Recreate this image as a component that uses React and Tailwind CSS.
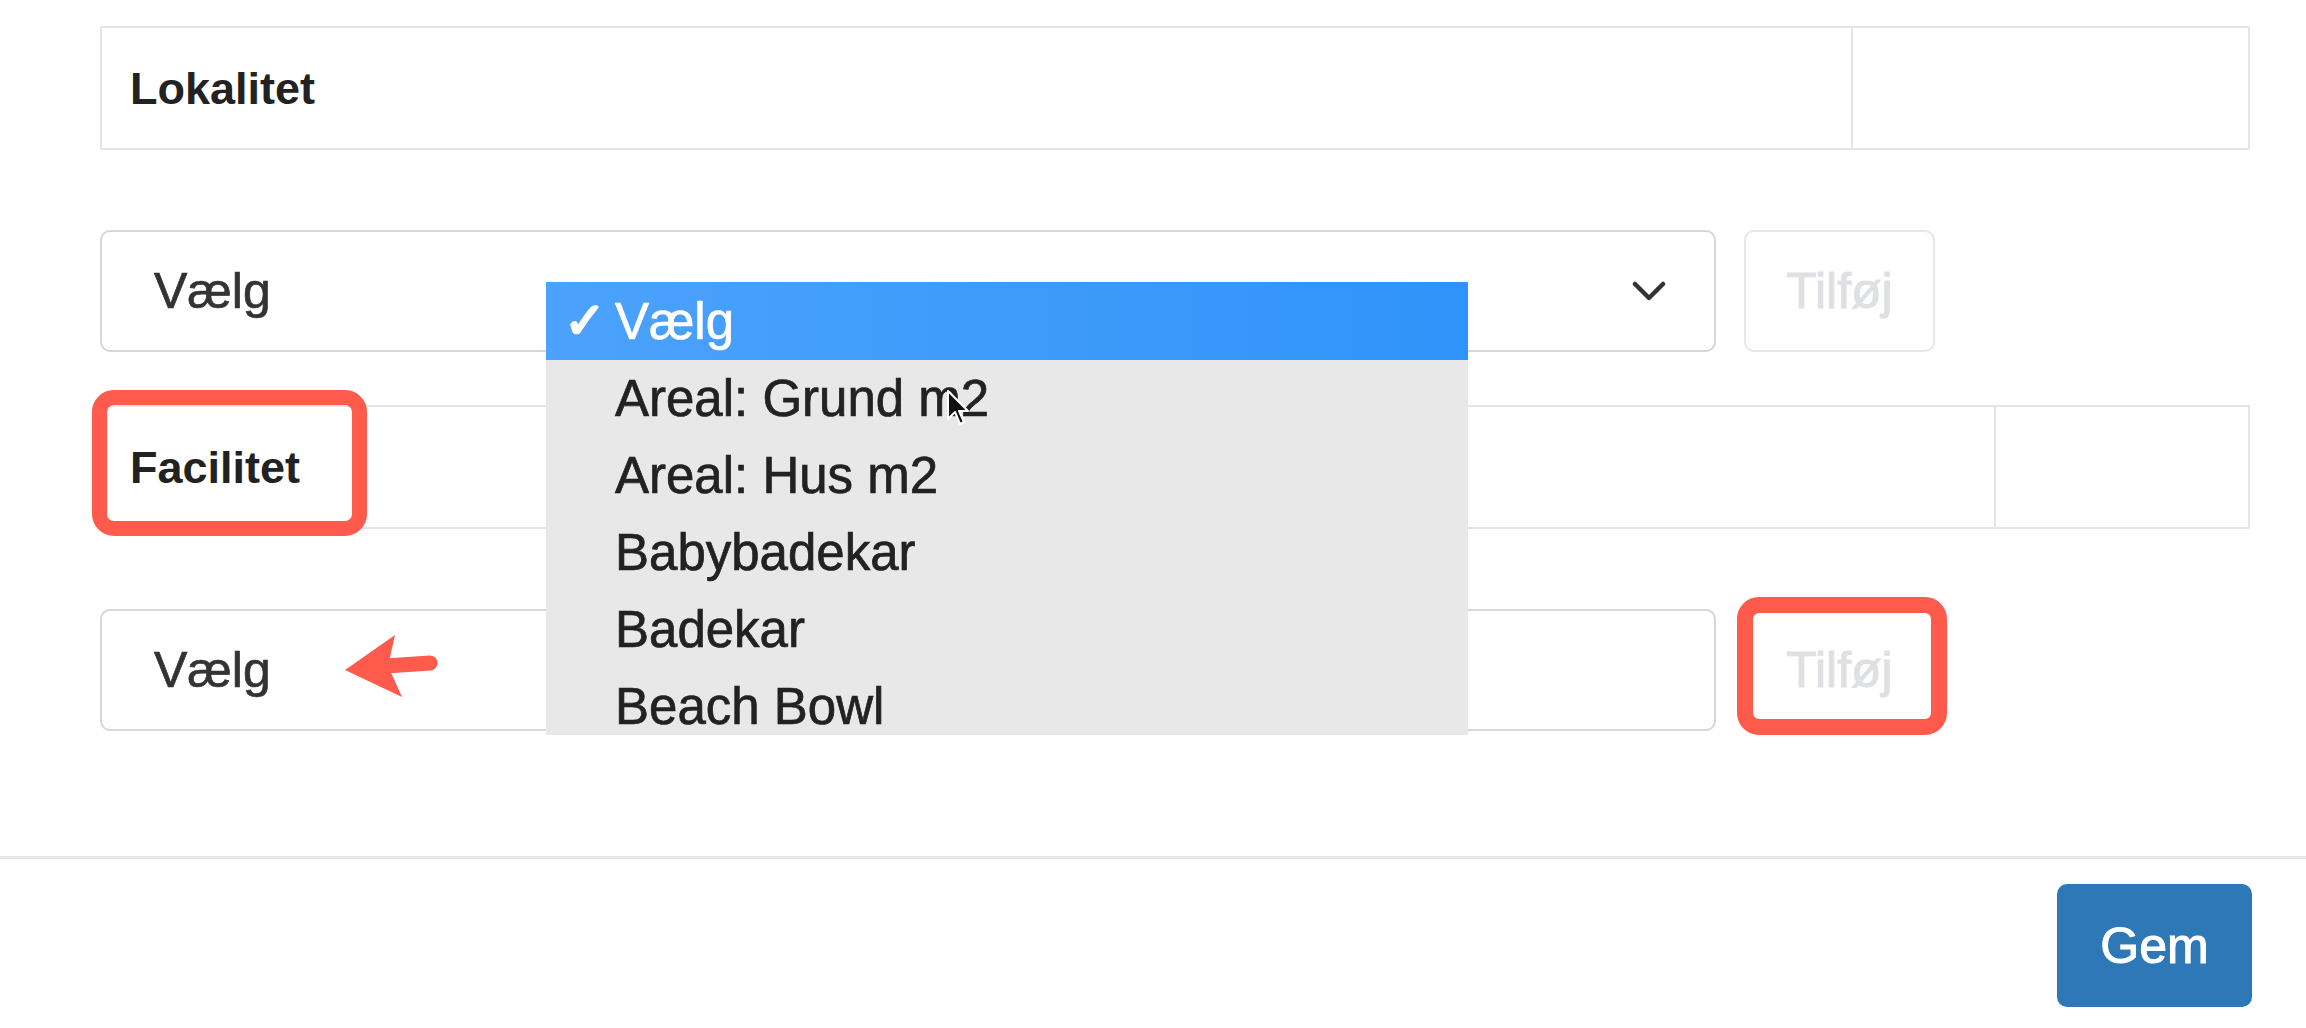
import React from "react";

const options = ["Areal: Grund m2", "Areal: Hus m2", "Babybadekar", "Badekar", "Beach Bowl"];

function TableHead({ label, split }) {
  return (
    <div className="flex h-[124px] border-2 border-[#e4e5e7]">
      <div className={`${split} flex items-center border-r-2 border-[#e4e5e7] pl-[28px]`}>
        <span className="text-[45px] font-bold leading-none text-[#222]">{label}</span>
      </div>
      <div className="flex-1" />
    </div>
  );
}

function SelectRow({ chevron }) {
  return (
    <div className="flex items-center gap-[28px]">
      <div className="flex h-[122px] w-[1616px] items-center justify-between rounded-[10px] border-2 border-[#d5d7da] bg-white pl-[52px] pr-[48px]">
        <span className="text-[50px] leading-none text-[#333] [-webkit-text-stroke:0.7px_#333]">Vælg</span>
        {chevron && (
          <svg width="34" height="22" viewBox="0 0 34 22" fill="none">
            <path d="M3 4 L17 18 L31 4" stroke="#333" strokeWidth="4.5" strokeLinecap="round" strokeLinejoin="round" />
          </svg>
        )}
      </div>
      <button className="flex h-[122px] w-[191px] items-center justify-center rounded-[10px] border-2 border-[#e6e7e9] bg-white text-[50px] leading-none text-[#dfe0e3] [-webkit-text-stroke:1px_#dfe0e3]">
        Tilføj
      </button>
    </div>
  );
}

export default function App() {
  return (
    <div className="relative h-[1028px] w-[2306px] overflow-hidden bg-white" style={{ fontFamily: '"Liberation Sans", Arial, sans-serif' }}>
      <div className="pl-[100px] pr-[56px] pt-[26px]">
        <TableHead label="Lokalitet" split="w-[1751px]" />
        <div className="mt-[80px]">
          <SelectRow chevron />
        </div>
        <div className="mt-[53px]">
          <TableHead label="Facilitet" split="w-[1894px]" />
        </div>
        <div className="mt-[80px]">
          <SelectRow chevron={false} />
        </div>
      </div>

      <div className="mt-[125px] h-[3px] w-full bg-[#e6e6e6]" />

      <div className="flex justify-end pr-[54px] pt-[25px]">
        <button className="flex h-[123px] w-[195px] items-center justify-center rounded-[10px] bg-[#2f78b8] text-[50px] leading-none text-white [-webkit-text-stroke:1px_#fff]">
          Gem
        </button>
      </div>

      {/* open select list */}
      <div className="absolute left-[546px] top-[282px] h-[453px] w-[922px] overflow-hidden bg-[#e8e8e8] text-[51px] leading-none text-[#222] [-webkit-text-stroke:0.7px_#222]">
        <div className="flex h-[78px] items-center bg-gradient-to-r from-[#4ca2fc] to-[#2f93f9] pl-[18px] text-white [-webkit-text-stroke:0.7px_#fff]">
          <span className="inline-block w-[51px] text-[50px] font-bold">✓</span>
          <span>Vælg</span>
        </div>
        {options.map((o) => (
          <div key={o} className="flex h-[77px] items-center pl-[69px]">
            {o}
          </div>
        ))}
      </div>

      {/* mouse pointer */}
      <svg className="absolute left-[946px] top-[389px]" width="24" height="38" viewBox="0 0 24 38">
        <path d="M2 2 L2 30 L9 23 L14 35 L18 33 L13 22 L22 22 Z" fill="#111" stroke="#fff" strokeWidth="2" strokeLinejoin="round" />
      </svg>

      {/* annotations */}
      <div className="absolute left-[92px] top-[390px] h-[146px] w-[275px] rounded-[22px] border-[15px] border-[#fe5b4c]" />
      <div className="absolute left-[1737px] top-[597px] h-[138px] w-[210px] rounded-[22px] border-[16px] border-[#fe5b4c]" />
      <svg className="absolute left-[340px] top-[630px]" width="100" height="72" viewBox="0 0 100 72">
        <path d="M5 40 L55 5 L48 36 L62 67 Z" fill="#fe5b4c" />
        <path d="M46 36 L90 33" stroke="#fe5b4c" strokeWidth="15" strokeLinecap="round" />
      </svg>
    </div>
  );
}
